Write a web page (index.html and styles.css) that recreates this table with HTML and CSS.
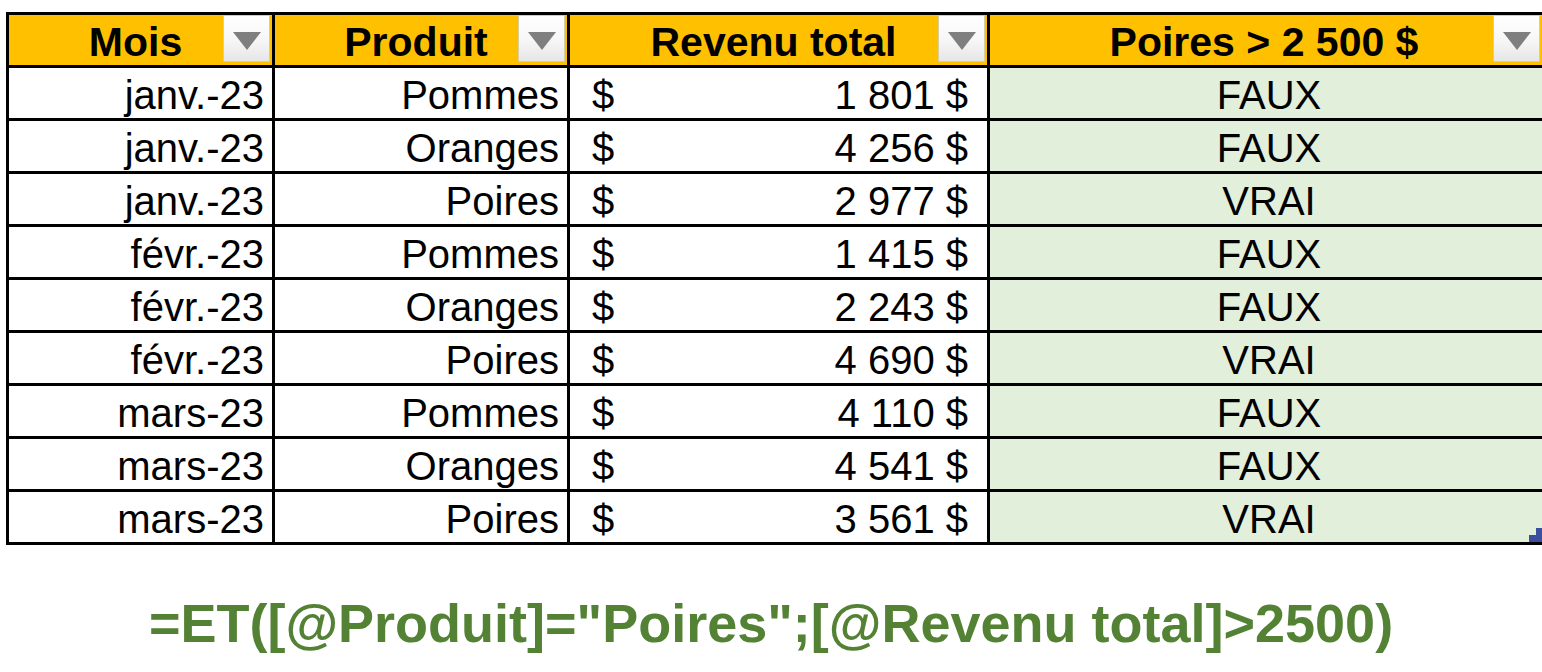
FILE: index.html
```html
<!DOCTYPE html>
<html lang="fr">
<head>
<meta charset="utf-8">
<title>Table</title>
<link rel="stylesheet" href="styles.css">
</head>
<body>
<table class="sheet">
  <colgroup>
    <col class="c1"><col class="c2"><col class="c3"><col class="c4">
  </colgroup>
  <thead>
    <tr>
      <th><span class="t">Mois</span><span class="dd"><svg viewBox="0 0 28 18" width="28" height="18"><path d="M0 0 H28 L14 18 Z" fill="#7f7f7f"/></svg></span></th>
      <th><span class="t">Produit</span><span class="dd"><svg viewBox="0 0 28 18" width="28" height="18"><path d="M0 0 H28 L14 18 Z" fill="#7f7f7f"/></svg></span></th>
      <th><span class="t">Revenu total</span><span class="dd"><svg viewBox="0 0 28 18" width="28" height="18"><path d="M0 0 H28 L14 18 Z" fill="#7f7f7f"/></svg></span></th>
      <th><span class="t">Poires &gt; 2 500 $</span><span class="dd last-dd"><svg viewBox="0 0 28 18" width="28" height="18"><path d="M0 0 H28 L14 18 Z" fill="#7f7f7f"/></svg></span></th>
    </tr>
  </thead>
  <tbody>
    <tr><td class="r"><span class="t">janv.-23</span></td><td class="r"><span class="t">Pommes</span></td><td class="m"><div class="acc"><span class="t">$</span><span class="t">1 801 $</span></div></td><td class="b"><span class="t">FAUX</span></td></tr>
    <tr><td class="r"><span class="t">janv.-23</span></td><td class="r"><span class="t">Oranges</span></td><td class="m"><div class="acc"><span class="t">$</span><span class="t">4 256 $</span></div></td><td class="b"><span class="t">FAUX</span></td></tr>
    <tr><td class="r"><span class="t">janv.-23</span></td><td class="r"><span class="t">Poires</span></td><td class="m"><div class="acc"><span class="t">$</span><span class="t">2 977 $</span></div></td><td class="b"><span class="t">VRAI</span></td></tr>
    <tr><td class="r"><span class="t">févr.-23</span></td><td class="r"><span class="t">Pommes</span></td><td class="m"><div class="acc"><span class="t">$</span><span class="t">1 415 $</span></div></td><td class="b"><span class="t">FAUX</span></td></tr>
    <tr><td class="r"><span class="t">févr.-23</span></td><td class="r"><span class="t">Oranges</span></td><td class="m"><div class="acc"><span class="t">$</span><span class="t">2 243 $</span></div></td><td class="b"><span class="t">FAUX</span></td></tr>
    <tr><td class="r"><span class="t">févr.-23</span></td><td class="r"><span class="t">Poires</span></td><td class="m"><div class="acc"><span class="t">$</span><span class="t">4 690 $</span></div></td><td class="b"><span class="t">VRAI</span></td></tr>
    <tr><td class="r"><span class="t">mars-23</span></td><td class="r"><span class="t">Pommes</span></td><td class="m"><div class="acc"><span class="t">$</span><span class="t">4 110 $</span></div></td><td class="b"><span class="t">FAUX</span></td></tr>
    <tr><td class="r"><span class="t">mars-23</span></td><td class="r"><span class="t">Oranges</span></td><td class="m"><div class="acc"><span class="t">$</span><span class="t">4 541 $</span></div></td><td class="b"><span class="t">FAUX</span></td></tr>
    <tr><td class="r"><span class="t">mars-23</span></td><td class="r"><span class="t">Poires</span></td><td class="m"><div class="acc"><span class="t">$</span><span class="t">3 561 $</span></div></td><td class="b"><span class="t">VRAI</span><span class="handle"></span></td></tr>
  </tbody>
</table>
<p class="formula">=ET([@Produit]="Poires";[@Revenu total]&gt;2500)</p>
</body>
</html>
```

FILE: styles.css
```css
html, body {
  margin: 0;
  padding: 0;
  background: #ffffff;
  overflow: hidden;
}
body {
  font-family: "Liberation Sans", Arial, sans-serif;
  color: #000;
}
.sheet {
  margin: 12px 0 0 6px;
  border-collapse: collapse;
  table-layout: fixed;
  width: 1542px;
}
.c1 { width: 266px; }
.c2 { width: 295px; }
.c3 { width: 420px; }
.c4 { width: 561px; }
.sheet th, .sheet td {
  border: 3px solid #000;
  height: 50px;
  padding: 0;
  font-size: 40px;
  line-height: 50px;
  white-space: nowrap;
  overflow: hidden;
}
.t {
  display: inline-block;
  transform: translateY(2px);
}
.sheet th {
  background: #ffc000;
  font-weight: bold;
  font-size: 41px;
  text-align: center;
  position: relative;
  padding-right: 10px;
}
.dd {
  position: absolute;
  right: 2px;
  top: 0;
  width: 47px;
  height: 47px;
  box-sizing: border-box;
  border: 1px solid #d6cda6;
  background: linear-gradient(#ffffff, #f6f6f6 55%, #e6e6e6);
  display: flex;
  align-items: center;
  justify-content: center;
  padding-top: 5px;
}
.last-dd { right: 8px; }
.dd svg { display: block; }
.r {
  text-align: right;
  padding-right: 8px !important;
}
.m { padding: 0 19px 0 22px !important; }
.acc {
  display: flex;
  justify-content: space-between;
}
.b {
  background: #e2efda;
  text-align: center;
  position: relative;
}
.handle {
  position: absolute;
  right: 5px;
  bottom: 0;
  width: 14px;
  height: 14px;
  background: #3a4fa0;
  clip-path: polygon(100% 0, 100% 100%, 0 100%, 0 50%, 50% 50%, 50% 0);
}
.formula {
  margin: 48px 0 0;
  text-align: center;
  font-size: 54px;
  font-weight: bold;
  line-height: 60px;
  color: #548235;
}
```
